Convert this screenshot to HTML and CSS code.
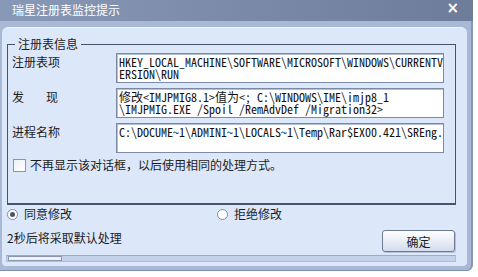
FILE: index.html
```html
<!DOCTYPE html>
<html lang="zh-CN">
<head>
    <meta charset="UTF-8">
    <title>瑞星注册表监控提示</title>
    <link rel="stylesheet" href="styles.css">
</head>
<body>
    <div class="window">
        <div class="titlebar">
            <span class="title">瑞星注册表监控提示</span>
            <span class="close">×</span>
        </div>
        <div class="client">
            <fieldset class="group">
                <legend>注册表信息</legend>
                <div class="row">
                    <span class="label">注册表项</span>
                    <div class="field">HKEY_LOCAL_MACHINE\SOFTWARE\MICROSOFT\WINDOWS\CURRENTV
ERSION\RUN</div>
                </div>
                <div class="row">
                    <span class="label spread">发现</span>
                    <div class="field">修改&lt;IMJPMIG8.1&gt;值为&lt;; C:\WINDOWS\IME\imjp8_1
\IMJPMIG.EXE /Spoil /RemAdvDef /Migration32&gt;</div>
                </div>
                <div class="row">
                    <span class="label">进程名称</span>
                    <div class="field">C:\DOCUME~1\ADMINI~1\LOCALS~1\Temp\Rar$EX00.421\SREng.</div>
                </div>
                <label class="check"><span class="box"></span>不再显示该对话框，以后使用相同的处理方式。</label>
            </fieldset>

            <div class="choices">
                <label class="radio"><span class="dot on"></span>同意修改</label>
                <label class="radio"><span class="dot"></span>拒绝修改</label>
            </div>

            <div class="footer">
                <span class="status">2秒后将采取默认处理</span>
                <button type="button">确定</button>
            </div>

            <div class="progress"><div class="fill"></div></div>
        </div>
    </div>
</body>
</html>
```

FILE: styles.css
```css
body {
    margin: 0;
    width: 478px;
    height: 277px;
    overflow: hidden;
    background: #fff;
    font-family: "Noto Sans CJK SC", "Liberation Sans", sans-serif;
    font-size: 12px;
    color: #1c1c1c;
}
.window {
    width: 466px;
    height: 266px;
    padding: 0 4px 4px 1px;
    background: #a9b8d5;
    border-right: 2px solid #8797b6;
    border-bottom: 1px solid #7f8fae;
    border-radius: 0 0 6px 0;
    display: flex;
    flex-direction: column;
}
.titlebar {
    height: 21px;
    margin: 0 -6px 6px -1px;
    padding: 0 14px 0 12px;
    background: linear-gradient(to right, #8899b7, #7a8aa8 50%, #6c7c99);
    color: #fff;
    display: flex;
    align-items: center;
    justify-content: space-between;
}
.title {
    font-size: 12px;
    line-height: 14px;
    margin-top: -1px;
}
.close {
    font-family: "DejaVu Sans", sans-serif;
    font-size: 15px;
    font-weight: bold;
    line-height: 12px;
    margin-top: -5px;
}
.client {
    flex: 1;
    min-height: 0;
    margin-left: 1px;
    background: #dce7f9;
    border-radius: 6px 6px 4px 4px;
    border-top: 1px solid #eef3fc;
    display: flex;
    flex-direction: column;
}
.group {
    margin: 9px 11px 0 5px;
    padding: 2px 11px 31px 4px;
    border: 1px solid #46536b;
    border-width: 1px 1px 2px 1px;
    min-width: 0;
}
.group legend {
    margin-left: 3px;
    padding: 0 3px;
    line-height: 14px;
}
.row {
    display: flex;
    margin-bottom: 5px;
}
.label {
    width: 104px;
    padding-top: 2px;
    line-height: 14px;
}
.label.spread {
    width: 46px;
    margin-right: 58px;
    text-align-last: justify;
}
.field {
    flex: 1;
    height: 24px;
    padding: 2px;
    background: #fff;
    border: 1px solid #7a89a4;
    box-shadow: inset 1px 1px 0 #b4bfd2;
    font-family: "Noto Sans Mono CJK SC", "Liberation Mono", monospace;
    font-size: 12px;
    line-height: 12px;
    white-space: pre;
    overflow: hidden;
    color: #111;
}
.check {
    display: flex;
    align-items: center;
    margin-top: 4px;
    line-height: 14px;
}
.box {
    width: 11px;
    height: 11px;
    margin: 0 4px 0 1px;
    background: linear-gradient(135deg, #eef1f6, #fff);
    border: 1px solid #8795ad;
}
.choices {
    display: flex;
    margin: 2px 0 0 5px;
    line-height: 14px;
}
.radio {
    display: flex;
    align-items: center;
    width: 210px;
}
.dot {
    width: 9px;
    height: 9px;
    margin-right: 6px;
    border: 1px solid #7f8da6;
    border-radius: 50%;
    background: #fff;
    position: relative;
}
.dot.on::after {
    content: "";
    position: absolute;
    left: 2px;
    top: 2px;
    width: 5px;
    height: 5px;
    border-radius: 50%;
    background: #4b5466;
}
.footer {
    display: flex;
    justify-content: space-between;
    align-items: flex-start;
    margin: 9px 12px 0 5px;
}
.status {
    margin-top: 1px;
    line-height: 14px;
}
button {
    width: 73px;
    height: 22px;
    padding: 0;
    font-family: inherit;
    font-size: 12px;
    color: #1c1c1c;
    background: linear-gradient(#fdfeff, #e4eaf5 60%, #d3dcec);
    border: 1px solid #6d7b94;
    border-radius: 3px;
    box-shadow: 1px 1px 0 #b5c1d6;
}
.progress {
    height: 5px;
    margin: 3px 11px 0 4px;
    background: #c4d1e9;
    border: 1px solid #b0bdd7;
    border-top-color: #9eabc6;
}
.fill {
    width: 52px;
    height: 3px;
    margin-left: 1px;
    background: #eef3fb;
    border: 1px solid #8a97b0;
}
```
